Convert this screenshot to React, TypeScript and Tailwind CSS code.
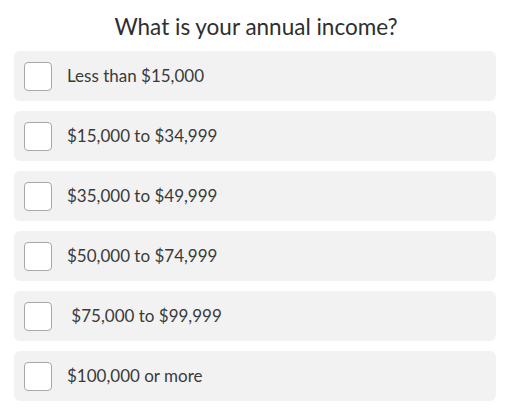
const options = [
	'Less than $15,000',
	'$15,000 to $34,999',
	'$35,000 to $49,999',
	'$50,000 to $74,999',
	'\u00a0$75,000 to $99,999',
	'$100,000 or more',
];

const App = () => {
	return (
		<div className="w-[512px] h-[414px] bg-white font-['Lato',sans-serif] text-[#333]">
			<h1 className="pt-[12px] h-[51px] text-center text-[22.5px] leading-[30px] text-[#2e2e2e]">What is your annual income?</h1>
			<div className="flex flex-col gap-[10px] pl-[14px] pr-[16px]">
				{options.map((label, index) => (
					<label
						key={index}
						className="flex items-center h-[50px] rounded-[6px] bg-[#f2f2f2] pl-[10px] cursor-pointer"
					>
						<span className="w-[28px] h-[29px] rounded-[4px] border border-[#a8a8a8] bg-white shrink-0" />
						<span className="ml-[15px] text-[17px] text-[#3a3a3a]">{label}</span>
					</label>
				))}
			</div>
		</div>
	);
};

export default App;
